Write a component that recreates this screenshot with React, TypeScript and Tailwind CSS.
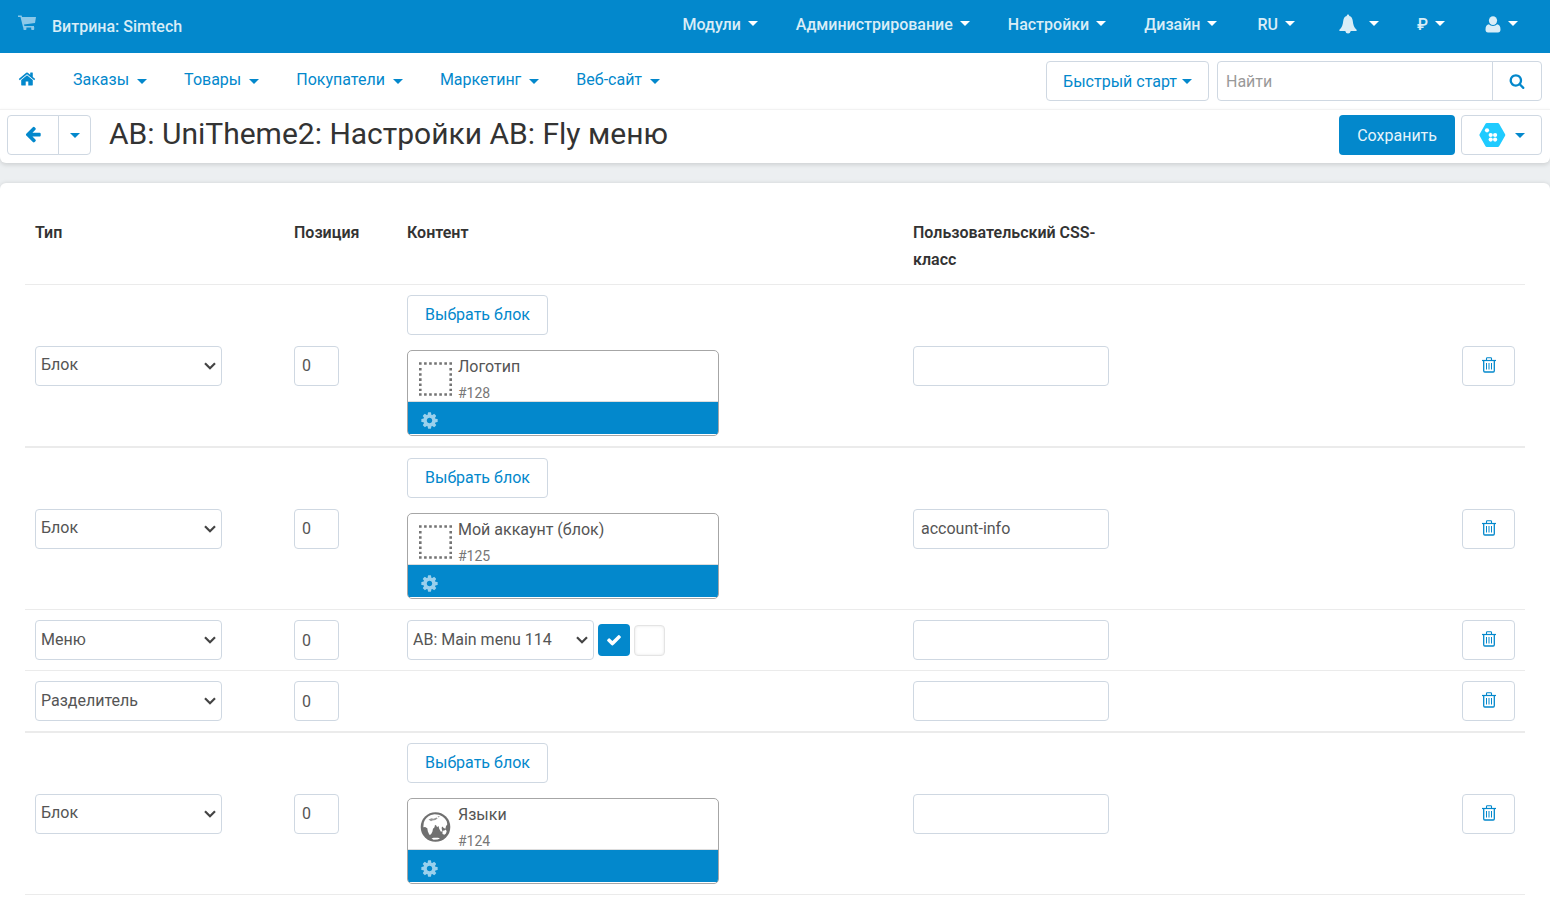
import React from "react";

type IconProps = { d: string; className: string };

const Icon = ({ d, className }: IconProps) => (
  <svg viewBox="0 0 1792 1792" className={className} fill="currentColor" aria-hidden="true">
    <path d={d} />
  </svg>
);

const ICONS = {
  search:
    "M1216 832q0-185-131.500-316.500t-316.500-131.500-316.500 131.500-131.500 316.500 131.500 316.500 316.500 131.500 316.500-131.500 131.500-316.500zm512 832q0 52-38 90t-90 38q-54 0-90-38l-343-342q-179 124-399 124-143 0-273.500-55.500t-225-150-150-225-55.500-273.500 55.500-273.500 150-225 225-150 273.500-55.500 273.500 55.500 225 150 150 225 55.500 273.500q0 220-124 399l343 343q37 37 37 90z",
  home: "M1472 992v480q0 26-19 45t-45 19h-384v-384h-256v384h-384q-26 0-45-19t-19-45v-480q0-1 .5-3t.5-3l575-474 575 474q1 2 1 6zm223-69l-62 74q-8 9-21 11h-3q-13 0-21-7l-692-577-692 577q-12 8-24 7-13-2-21-11l-62-74q-8-10-7-23.500t11-21.500l719-599q32-26 76-26t76 26l244 204v-195q0-14 9-23t23-9h192q14 0 23 9t9 23v408l219 182q10 8 11 21.500t-7 23.500z",
  back: "M1664 896v128q0 53-32.500 90.500t-84.500 37.500h-704l293 294q38 36 38 90t-38 90l-75 76q-37 37-90 37-52 0-91-37l-651-652q-37-37-37-90 0-52 37-91l651-650q38-38 91-38 52 0 90 38l75 74q38 38 38 91t-38 91l-293 293h704q52 0 84.500 37.500t32.500 90.500z",
  check:
    "M1671 566q0 40-28 68l-724 724-136 136q-28 28-68 28t-68-28l-136-136-362-362q-28-28-28-68t28-68l136-136q28-28 68-28t68 28l294 295 656-657q28-28 68-28t68 28l136 136q28 28 28 68z",
  gear: "M1152 896q0-106-75-181t-181-75-181 75-75 181 75 181 181 75 181-75 75-181zm512-109v222q0 12-8 23t-20 13l-185 28q-19 54-39 91 35 50 107 138 10 12 10 25t-9 23q-27 37-99 108t-94 71q-12 0-26-9l-138-108q-44 23-91 38-16 136-29 186-7 28-36 28h-222q-14 0-24.500-8.500t-11.500-21.500l-28-184q-49-16-90-37l-141 107q-10 9-25 9-14 0-25-11-126-114-165-168-7-10-7-23 0-12 8-23 15-21 51-66.500t54-70.500q-27-50-41-99l-183-27q-13-2-21-12.500t-8-23.500v-222q0-12 8-23t19-13l186-28q14-46 39-92-40-57-107-138-10-12-10-24 0-10 9-23 26-36 98.500-107.500t94.500-71.500q13 0 26 10l138 107q44-23 91-38 16-136 29-186 7-28 36-28h222q14 0 24.500 8.500t11.500 21.500l28 184q49 16 90 37l142-107q9-9 24-9 13 0 25 10 129 119 165 170 7 8 7 22 0 12-8 23-15 21-51 66.500t-54 70.500q26 50 41 98l183 28q13 2 21 12.500t8 23.500z",
};

const Caret = () => (
  <svg viewBox="0 0 10 5" className="h-[5px] w-[10px] shrink-0" fill="currentColor" aria-hidden="true">
    <path d="M0 0h10L5 5z" />
  </svg>
);

const CartIcon = () => (
  <svg viewBox="0 0 18 16" className="h-4 w-[18px]" fill="currentColor" aria-hidden="true">
    <path d="M0 .5h3.600l.5 1.500H18l-1 6L6 9.600l.4 1.400H16v1.500H5.100L2.500 1.900H0z" />
    <path d="M5.400 12h3v2.200q0 .8-.8.800H6.200q-.8 0-.8-.8zM13.200 12h3v2.200q0 .8-.8.800H14q-.8 0-.8-.8z" />
  </svg>
);

const BellIcon = () => (
  <svg viewBox="0 0 18 20" className="h-5 w-[18px]" fill="currentColor" aria-hidden="true">
    <path d="M9 .5c.8 0 1.300.6 1.300 1.500 2 .5 3.100 2.200 3.400 4.600.5 4.300 1.300 7.400 3.900 9.200v1.200H.4v-1.200c2.600-1.800 3.400-4.900 3.900-9.200C4.600 4.200 5.700 2.500 7.700 2 7.700 1.100 8.200.5 9 .5z" />
    <path d="M6.500 16.500h5v1q-.2 2-2.500 2t-2.500-2z" />
  </svg>
);

const UserIcon = () => (
  <svg viewBox="0 0 16 17" className="h-[17px] w-4" fill="currentColor" aria-hidden="true">
    <ellipse cx="8" cy="4.600" rx="4.100" ry="4.400" />
    <path d="M4 8.300C5 9.400 6.300 10 8 10s3-.6 4-1.700c2.200.3 3.500 2 3.500 5.200 0 1.900-.9 3-2.500 3H3c-1.600 0-2.500-1.100-2.500-3 0-3.200 1.300-4.900 3.500-5.200z" />
  </svg>
);

const TrashIcon = () => (
  <svg viewBox="0 0 14 16" className="h-4 w-[14px]" fill="none" stroke="currentColor" aria-hidden="true">
    <path d="M0 3.500h14" strokeWidth="1.200" />
    <path d="M4.500 3.300V1.500q0-.7.700-.7h3.600q.7 0 .7.700v1.800" strokeWidth="1.100" />
    <path d="M1.700 3.500v10.300q0 1.200 1.100 1.200h8.400q1.100 0 1.100-1.200V3.500" strokeWidth="1.300" />
    <path d="M4.500 6v6.500M7 6v6.500M9.500 6v6.500" strokeWidth="1" />
  </svg>
);

const HexLogo = () => (
  <svg viewBox="0 0 27 26" className="h-[26px] w-[27px]" aria-hidden="true">
    <path d="M7.800 2.500h11L24.800 13l-6 10.500h-11L1.900 13z" fill="#1fcbff" stroke="#1fcbff" strokeWidth="3" strokeLinejoin="round" />
    <g fill="#fff">
      <circle cx="8" cy="8.300" r="2.100" />
      <circle cx="11.700" cy="13" r="2.100" />
      <circle cx="16.100" cy="13" r="2.100" />
      <circle cx="11.700" cy="17.600" r="2.100" />
      <circle cx="16.100" cy="17.600" r="2.100" />
    </g>
  </svg>
);

const DottedBox = () => (
  <svg viewBox="0 0 33 34" className="h-[34px] w-[33px]" fill="none" stroke="#737373" strokeWidth="2.600" aria-hidden="true">
    <path d="M0 1.500h33M0 32.500h33" strokeDasharray="2.600 2.470" />
    <path d="M1.300 5v24M31.700 5v24" strokeDasharray="2.600 2.570" strokeDashoffset="-1" />
  </svg>
);

const Globe = () => (
  <svg viewBox="0 0 33 34" className="h-[34px] w-[33px]" aria-hidden="true">
    <circle cx="16.500" cy="17" r="14.800" fill="#707070" />
    <g fill="#fff">
      <path d="M4.800 12.500C6 9 8.500 6.300 12 5l3.500-.8 4.500.6 3.500 1.700 2.500 2.300 1.700 2.500.6 3-1.300 2-.6 2.500-1.700-.8-1.200-1.500-.9 1.200.6 3.500-1.300.5-1.700-3-.7-2.700-1.500 1.200-.5-1.500-1.500-1-.5 2.500-1.500 1.500-.6 3-1.500 2.800-1.600.2-1.500-3.500-.5-3-2.200-1.200-1.800.3z" />
      <path d="M23.500 20.800l2-.3.800-1 1.400 1.500-.7 2.500-1.600 1.200-1.900-.8z" />
      <path d="M12.500 28.600l2-.8 4.500-.1 2 .9-2.500 1-4 .1z" />
    </g>
    <path d="M9.500 9.500l3-1.200 2 .5 3-1.300 1.200.8-2.200 1.700-3 .4-1.500.9zM18.500 6l2.500.6-1.500.8z" fill="#9a9a9a" />
  </svg>
);

const TOP_MENU = ["Модули", "Администрирование", "Настройки", "Дизайн"];
const MAIN_MENU = ["Заказы", "Товары", "Покупатели", "Маркетинг", "Веб-сайт"];

type Row = {
  type: string;
  css: string;
  thick?: boolean;
  block?: { name: string; id: string; icon: "box" | "globe" };
  menu?: string;
};

const ROWS: Row[] = [
  { type: "Блок", css: "", block: { name: "Логотип", id: "#128", icon: "box" } },
  { type: "Блок", css: "account-info", thick: true, block: { name: "Мой аккаунт (блок)", id: "#125", icon: "box" } },
  { type: "Меню", css: "", menu: "AB: Main menu 114" },
  { type: "Разделитель", css: "" },
  { type: "Блок", css: "", thick: true, block: { name: "Языки", id: "#124", icon: "globe" } },
];

const field = "h-10 rounded-[4px] border border-[#cfd8e2] bg-white text-[#555]";
const outline = "h-10 rounded-[4px] border border-[#cfd8e2] bg-white text-[#0388cc]";

const SelectField = ({ label, value, options }: { label: string; value: string; options: string[] }) => (
  <div className="grid w-[187px] items-center">
    <select aria-label={label} defaultValue={value} className={field + " col-start-1 row-start-1 w-full appearance-none pr-6 pb-[2px] pl-[5px]"}>
      {options.map((option) => (
        <option key={option}>{option}</option>
      ))}
    </select>
    <svg
      viewBox="0 0 12 8"
      className="pointer-events-none col-start-1 row-start-1 mr-[6px] h-2 w-3 justify-self-end text-[#444]"
      fill="none"
      stroke="currentColor"
      strokeWidth="2.200"
      aria-hidden="true"
    >
      <path d="M1 1.200l5 5 5-5" />
    </svg>
  </div>
);

const BlockCard = ({ name, id, icon }: { name: string; id: string; icon: "box" | "globe" }) => (
  <div className="mt-[15px] w-[312px] overflow-hidden rounded-[5px] border border-[#a6a6a6] pb-px">
    <div className="flex h-[51px] gap-[6px] border-b border-[#ddd] pl-[11px]">
      <div className="pt-[11px]">{icon === "box" ? <DottedBox /> : <Globe />}</div>
      <div className="pt-[2px]">
        <div className="leading-[27px] text-[#555]">{name}</div>
        <div className="text-sm leading-[27px] text-[#777]">{id}</div>
      </div>
    </div>
    <div className="flex h-8 items-center bg-[#0388cc] pt-[5px] pl-3">
      <button type="button" aria-label={"Настройки блока " + name} className="text-[#9bd0ec]">
        <Icon d={ICONS.gear} className="size-[19px]" />
      </button>
    </div>
  </div>
);

const TableRow = ({ row, index }: { row: Row; index: number }) => {
  const cell = "border-[#ebebeb] p-[10px] align-middle " + (row.thick ? "border-t-2" : "border-t");
  return (
    <tr>
      <td className={cell}>
        <SelectField label={"Тип, строка " + (index + 1)} value={row.type} options={["Блок", "Меню", "Разделитель"]} />
      </td>
      <td className={cell}>
        <input aria-label={"Позиция, строка " + (index + 1)} defaultValue="0" className={field + " block w-[45px] px-[7px]"} />
      </td>
      <td className={cell}>
        {row.block && (
          <>
            <button type="button" className={outline + " block px-[17px] pb-[2px]"}>
              Выбрать блок
            </button>
            <BlockCard {...row.block} />
          </>
        )}
        {row.menu && (
          <div className="flex items-center gap-1">
            <SelectField label="Меню" value={row.menu} options={[row.menu]} />
            <label className="grid size-8 cursor-pointer place-items-center rounded-[4px] bg-[#0388cc] text-white">
              <input type="checkbox" aria-label="Показывать меню" defaultChecked className="col-start-1 row-start-1 size-8 appearance-none" />
              <span className="pointer-events-none col-start-1 row-start-1">
                <Icon d={ICONS.check} className="size-4" />
              </span>
            </label>
            <input
              type="checkbox"
              aria-label="Дополнительный параметр меню"
              className="size-[31px] appearance-none rounded-[4px] border border-[#e4e4e4] bg-white shadow-[inset_0_0_3px_#e4e4e4]"
            />
          </div>
        )}
      </td>
      <td className={cell}>
        <input aria-label={"Пользовательский CSS-класс, строка " + (index + 1)} defaultValue={row.css} className={field + " block w-[196px] px-[7px]"} />
      </td>
      <td className={cell}>
        <button type="button" aria-label="Удалить" className={outline + " ml-auto flex w-[53px] items-center justify-center pb-[2px]"}>
          <TrashIcon />
        </button>
      </td>
    </tr>
  );
};

export default function App() {
  return (
    <div className="flex min-h-screen flex-col bg-[#eceff1] font-['Roboto',sans-serif] text-base leading-[27px] text-[#333]">
      <header className="flex h-[53px] items-center justify-between bg-[#0388cc] pr-8 pl-[18px] text-[#d9edf7]">
        <div className="flex items-center gap-4">
          <a href="#store" aria-label="Витрина" className="pb-2 text-[#8cc8e8]">
            <CartIcon />
          </a>
          <span className="font-medium">Витрина: Simtech</span>
        </div>
        <nav className="flex items-center gap-[38px] pb-[5px] font-medium">
          {TOP_MENU.map((item) => (
            <a key={item} href="#menu" className="flex items-center gap-[7px]">
              {item}
              <span className="pb-[2px] text-white">
                <Caret />
              </span>
            </a>
          ))}
          <a href="#lang" className="ml-[2px] flex items-center gap-[7px]">
            RU
            <span className="pb-[2px] text-white">
              <Caret />
            </span>
          </a>
          <a href="#notifications" aria-label="Уведомления" className="ml-[6px] flex items-center gap-3">
            <BellIcon />
            <span className="pb-[2px] text-white">
              <Caret />
            </span>
          </a>
          <a href="#currency" className="flex items-center gap-[7px]">
            ₽
            <span className="pb-[2px] text-white">
              <Caret />
            </span>
          </a>
          <a href="#profile" aria-label="Профиль" className="ml-[2px] flex items-center gap-[7px]">
            <UserIcon />
            <span className="pb-[2px] text-white">
              <Caret />
            </span>
          </a>
        </nav>
      </header>

      <div className="flex h-14 items-center justify-between bg-white pr-2 pl-[18px]">
        <nav className="flex items-center gap-[37px] pb-1 text-[#0388cc]">
          <a href="#home" aria-label="Главная">
            <Icon d={ICONS.home} className="size-[18px]" />
          </a>
          {MAIN_MENU.map((item) => (
            <a key={item} href="#section" className="flex items-center gap-2">
              {item}
              <span className="pt-1">
                <Caret />
              </span>
            </a>
          ))}
        </nav>
        <div className="flex items-center gap-2">
          <button type="button" className={outline + " flex items-center gap-[5px] px-4"}>
            Быстрый старт
            <Caret />
          </button>
          <form className="flex">
            <input
              type="search"
              aria-label="Найти"
              placeholder="Найти"
              className="h-10 w-[276px] rounded-l-[4px] border border-[#cfd8e2] bg-white px-2 placeholder:text-[#999]"
            />
            <button
              type="button"
              aria-label="Искать"
              className="-ml-px flex h-10 w-[50px] items-center justify-center rounded-r-[4px] border border-[#cfd8e2] text-[#0388cc]"
            >
              <Icon d={ICONS.search} className="size-4" />
            </button>
          </form>
        </div>
      </div>

      <div className="flex h-[54px] items-center justify-between rounded-b-[6px] border-t border-[#f2f2f2] bg-white pr-2 pb-[3px] pl-[7px] shadow-[0_2px_4px_rgba(0,0,0,0.12)]">
        <div className="flex items-center gap-[18px]">
          <div className="flex text-[#0388cc]">
            <button type="button" aria-label="Назад" className="flex h-10 w-[52px] items-center justify-center rounded-l-[4px] border border-[#cfd8e2] pb-[2px]">
              <Icon d={ICONS.back} className="size-[18px]" />
            </button>
            <button type="button" aria-label="Последние страницы" className="-ml-px flex h-10 w-[33px] items-center justify-center rounded-r-[4px] border border-[#cfd8e2]">
              <Caret />
            </button>
          </div>
          <h1 className="pb-[3px] text-[30px] font-normal">AB: UniTheme2: Настройки AB: Fly меню</h1>
        </div>
        <div className="flex items-center gap-[6px]">
          <button type="button" className="h-10 rounded-[4px] bg-[#0388cc] px-[18px] text-[#e6f4fb]">
            Сохранить
          </button>
          <button type="button" aria-label="Действия" className={outline + " flex w-[81px] items-center justify-center gap-[9px]"}>
            <HexLogo />
            <Caret />
          </button>
        </div>
      </div>

      <main className="mt-5 flex-1 rounded-t-[6px] bg-white px-[25px] pt-[26px] shadow-[0_0_4px_rgba(0,0,0,0.12)]">
        <table className="w-full table-fixed border-separate border-spacing-0 border-b border-[#ebebeb]">
          <thead>
            <tr className="text-left align-top">
              <th scope="col" className="w-[259px] px-[10px] pt-[10px] font-semibold">Тип</th>
              <th scope="col" className="w-[113px] px-[10px] pt-[10px] font-semibold">Позиция</th>
              <th scope="col" className="w-[506px] px-[10px] pt-[10px] font-semibold">Контент</th>
              <th scope="col" className="w-[216px] px-[10px] pt-[10px] pb-[11px] font-semibold">Пользовательский CSS-класс</th>
              <td className="p-[10px]" />
            </tr>
          </thead>
          <tbody>
            {ROWS.map((row, index) => (
              <TableRow key={index} row={row} index={index} />
            ))}
          </tbody>
        </table>
      </main>
    </div>
  );
}
